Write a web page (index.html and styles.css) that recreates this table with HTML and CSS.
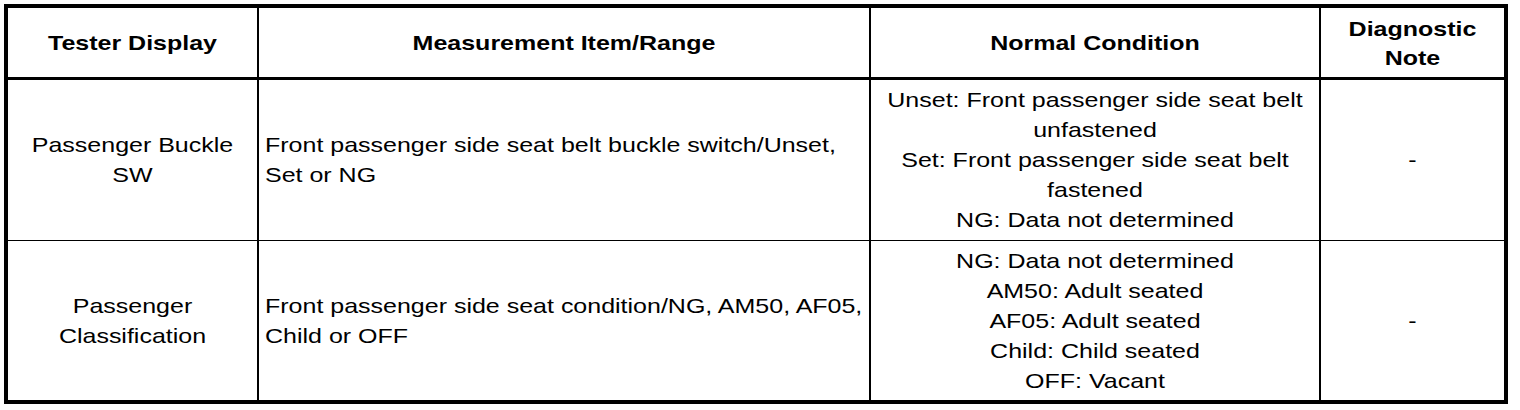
FILE: index.html
```html
<!DOCTYPE html>
<html>
<head>
<meta charset="utf-8">
<link rel="stylesheet" href="styles.css">
</head>
<body>
<div class="sheet">
  <div class="cell head"><span class="txt">Tester Display</span></div>
  <div class="cell head"><span class="txt">Measurement Item/Range</span></div>
  <div class="cell head"><span class="txt">Normal Condition</span></div>
  <div class="cell head last"><span class="txt">Diagnostic<br>Note</span></div>

  <div class="cell"><span class="txt">Passenger Buckle<br>SW</span></div>
  <div class="cell left"><span class="txt">Front passenger side seat belt buckle switch/Unset,<br>Set or NG</span></div>
  <div class="cell"><span class="txt">Unset: Front passenger side seat belt<br>unfastened<br>Set: Front passenger side seat belt<br>fastened<br>NG: Data not determined</span></div>
  <div class="cell last"><span class="txt">-</span></div>

  <div class="cell bottom"><span class="txt">Passenger<br>Classification</span></div>
  <div class="cell left bottom"><span class="txt">Front passenger side seat condition/NG, AM50, AF05,<br>Child or OFF</span></div>
  <div class="cell bottom"><span class="txt">NG: Data not determined<br>AM50: Adult seated<br>AF05: Adult seated<br>Child: Child seated<br>OFF: Vacant</span></div>
  <div class="cell last bottom"><span class="txt">-</span></div>
</div>
</body>
</html>
```

FILE: styles.css
```css
html, body {
  margin: 0;
  padding: 0;
  background: #fff;
}
.sheet {
  margin: 4px;
  width: 1504px;
  box-sizing: border-box;
  border: 4px solid #000;
  display: grid;
  grid-template-columns: 251px 612px 450px 183px;
  grid-template-rows: 72px 161px 159px;
  font-family: "Liberation Sans", Arial, sans-serif;
  font-size: 21px;
  line-height: 30px;
  color: #000;
}
.cell {
  border-right: 2px solid #000;
  border-bottom: 1px solid #000;
  display: flex;
  align-items: center;
  padding: 0 6px;
  box-sizing: border-box;
  text-align: center;
}
.txt {
  display: block;
  width: 100%;
  transform: scaleX(1.19);
  transform-origin: center;
}
.cell.head {
  font-weight: bold;
  border-bottom: 3px solid #000;
  line-height: 29px;
}
.cell.left {
  text-align: left;
}
.cell.left .txt {
  transform-origin: left center;
}
.cell.last {
  border-right: none;
}
.cell.bottom {
  border-bottom: none;
}
```
